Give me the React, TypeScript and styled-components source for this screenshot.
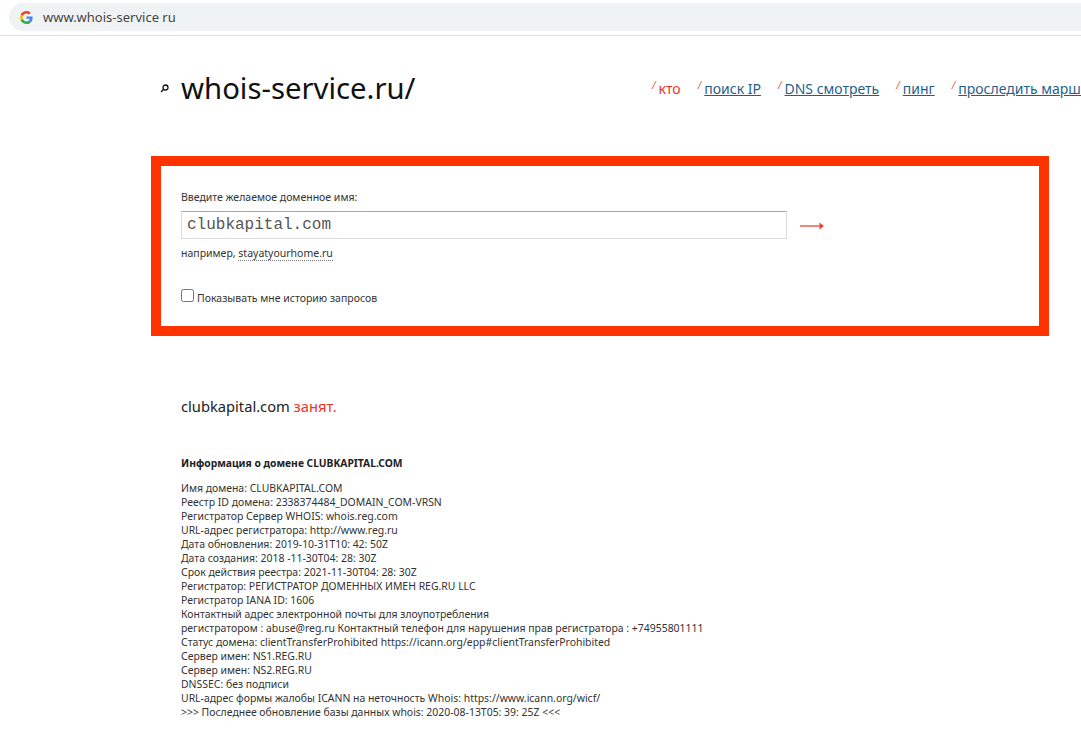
import React from "react";
import styled, {createGlobalStyle} from "styled-components";

const GlobalStyle = createGlobalStyle`
  html, body {
    margin: 0;
    padding: 0;
    background: #fff;
    overflow: hidden;
  }
  body {
    font-family: "Noto Sans", "DejaVu Sans", sans-serif;
    color: #222;
  }
`;

const Page = styled.div`
  width: 1081px;
  height: 733px;
  overflow: hidden;
`;

const BrowserBar = styled.div`
  height: 36px;
  border-bottom: 1px solid #dfe1e3;
  padding: 3px 0 0 9px;
  box-sizing: border-box;
`;

const Omnibox = styled.div`
  height: 28px;
  width: 1072px;
  background: #f0f3f4;
  border-radius: 14px 0 0 14px;
  display: flex;
  align-items: center;
  padding-left: 11px;
  gap: 10px;
  box-sizing: border-box;
  font-size: 13px;
  color: #444;
`;

const Header = styled.header`
  height: 120px;
  display: flex;
  align-items: flex-start;
  padding: 33px 0 0 160px;
  box-sizing: border-box;
  white-space: nowrap;
`;

const Logo = styled.div`
  width: 492px;
  display: flex;
  align-items: center;
  gap: 12px;
  flex-shrink: 0;
  font-size: 29.300px;
  line-height: 38px;
  color: #111;
`;

const Nav = styled.nav`
  display: flex;
  padding-top: 6px;
  gap: 17px;
  font-size: 14px;
  line-height: 20px;
`;

const NavItem = styled.span`
  &::before {
    content: "/";
    color: #ee5544;
    font-size: 10px;
    vertical-align: 5px;
    margin-right: 3px;
    font-style: italic;
  }
`;

const NavLink = styled.a<{ $active?: boolean }>`
  color: ${(p) => (p.$active ? "#e8352a" : "#1f5f8b")};
  text-decoration: ${(p) => (p.$active ? "none" : "underline")};
`;

const SearchBox = styled.form`
  width: 898px;
  height: 180px;
  margin-left: 151px;
  border: 10px solid #ff3300;
  box-sizing: border-box;
  padding: 24px 20px 0;
  font-size: 10.500px;
  color: #333;
`;

const FieldLabel = styled.div`
  line-height: 14px;
  margin-bottom: 7px;
`;

const FieldRow = styled.div`
  display: flex;
  align-items: center;
  gap: 13px;
`;

const DomainInput = styled.input`
  width: 606px;
  height: 28px;
  box-sizing: border-box;
  border: 1px solid #dcdcdc;
  border-top-color: #a8a8a8;
  padding: 0 5px;
  font-family: "Liberation Mono", monospace;
  font-size: 16px;
  color: #555;
  outline: none;
`;

const Hint = styled.div`
  margin-top: 7px;
  line-height: 14px;
`;

const Sample = styled.span`
  border-bottom: 1px dotted #777;
`;

const HistoryRow = styled.label`
  display: flex;
  align-items: flex-start;
  gap: 3px;
  margin-top: 29px;
  line-height: 14px;
`;

const HistoryCheck = styled.input`
  width: 13px;
  height: 13px;
  margin: 0;
`;

const HistoryText = styled.span`
  margin-top: 2px;
`;

const Result = styled.section`
  padding: 61px 0 0 181px;
`;

const Status = styled.div`
  font-size: 14.700px;
  line-height: 18px;
  color: #222;
`;

const Taken = styled.span`
  color: #e8352a;
`;

const InfoTitle = styled.div`
  margin-top: 41px;
  font-size: 10.300px;
  font-weight: 700;
  line-height: 14px;
  color: #222;
`;

const InfoLines = styled.div`
  margin-top: 11px;
  font-size: 10.450px;
  line-height: 14px;
  color: #333;
  white-space: nowrap;
`;

const GoogleIcon = () => (
  <svg width="13" height="13" viewBox="0 0 48 48">
    <path fill="#EA4335" d="M24 9.500c3.500 0 6.700 1.200 9.200 3.600l6.900-6.900C35.900 2.400 30.400 0 24 0 14.600 0 6.500 5.400 2.600 13.200l8 6.200C12.400 13.700 17.700 9.500 24 9.500z" />
    <path fill="#4285F4" d="M46.500 24.500c0-1.600-.1-3.100-.4-4.500H24v9h12.700c-.6 2.900-2.200 5.400-4.700 7.100l7.700 6c4.500-4.200 6.800-10.300 6.800-17.600z" />
    <path fill="#FBBC05" d="M10.500 28.600c-.5-1.400-.8-3-.8-4.600s.3-3.200.8-4.600l-8-6.200C.9 16.500 0 20.100 0 24s.9 7.500 2.600 10.800l7.900-6.200z" />
    <path fill="#34A853" d="M24 48c6.500 0 11.900-2.100 15.900-5.800l-7.700-6c-2.200 1.400-4.900 2.300-8.200 2.300-6.300 0-11.600-4.200-13.500-9.900l-8 6.200C6.500 42.600 14.600 48 24 48z" />
  </svg>
);

const LensIcon = () => (
  <svg width="9" height="9" viewBox="0 0 9 9" fill="none" stroke="#111" strokeWidth="1.300">
    <circle cx="5.500" cy="3.500" r="2.500" />
    <path d="M3.700 5.300 1 8" />
  </svg>
);

const ArrowIcon = () => (
  <svg width="24" height="12" viewBox="0 0 24 12" fill="none">
    <path d="M0 7h22" stroke="#e8604f" strokeWidth="1.500" />
    <path d="M19.500 3.500 24 7l-4.500 3.500z" fill="#e8432f" />
  </svg>
);

const navItems = [
  {label: "кто", active: true},
  {label: "поиск IP"},
  {label: "DNS смотреть"},
  {label: "пинг"},
  {label: "проследить маршрут"},
];

const infoLines = [
  "Имя домена: CLUBKAPITAL.COM",
  "Реестр ID домена: 2338374484_DOMAIN_COM-VRSN",
  "Регистратор Сервер WHOIS: whois.reg.com",
  "URL-адрес регистратора: http://www.reg.ru",
  "Дата обновления: 2019-10-31T10: 42: 50Z",
  "Дата создания: 2018 -11-30T04: 28: 30Z",
  "Срок действия реестра: 2021-11-30T04: 28: 30Z",
  "Регистратор: РЕГИСТРАТОР ДОМЕННЫХ ИМЕН REG.RU LLC",
  "Регистратор IANA ID: 1606",
  "Контактный адрес электронной почты для злоупотребления",
  "регистратором : abuse@reg.ru Контактный телефон для нарушения прав регистратора : +74955801111",
  "Статус домена: clientTransferProhibited https://icann.org/epp#clientTransferProhibited",
  "Сервер имен: NS1.REG.RU",
  "Сервер имен: NS2.REG.RU",
  "DNSSEC: без подписи",
  "URL-адрес формы жалобы ICANN на неточность Whois: https://www.icann.org/wicf/",
  ">>> Последнее обновление базы данных whois: 2020-08-13T05: 39: 25Z <<<",
];

export default function App() {
  return (
    <Page>
      <GlobalStyle />
      <BrowserBar>
        <Omnibox>
          <GoogleIcon />
          www.whois-service ru
        </Omnibox>
      </BrowserBar>

      <Header>
        <Logo>
          <LensIcon />
          whois-service.ru/
        </Logo>
        <Nav>
          {navItems.map((item) => (
            <NavItem key={item.label}>
              <NavLink href="#" $active={item.active}>{item.label}</NavLink>
            </NavItem>
          ))}
        </Nav>
      </Header>

      <SearchBox>
        <FieldLabel>Введите желаемое доменное имя:</FieldLabel>
        <FieldRow>
          <DomainInput defaultValue="clubkapital.com" />
          <ArrowIcon />
        </FieldRow>
        <Hint>например, <Sample>stayatyourhome.ru</Sample></Hint>
        <HistoryRow>
          <HistoryCheck type="checkbox" />
          <HistoryText>Показывать мне историю запросов</HistoryText>
        </HistoryRow>
      </SearchBox>

      <Result>
        <Status>clubkapital.com <Taken>занят.</Taken></Status>
        <InfoTitle>Информация о домене CLUBKAPITAL.COM</InfoTitle>
        <InfoLines>
          {infoLines.map((line) => (
            <div key={line}>{line}</div>
          ))}
        </InfoLines>
      </Result>
    </Page>
  );
}
